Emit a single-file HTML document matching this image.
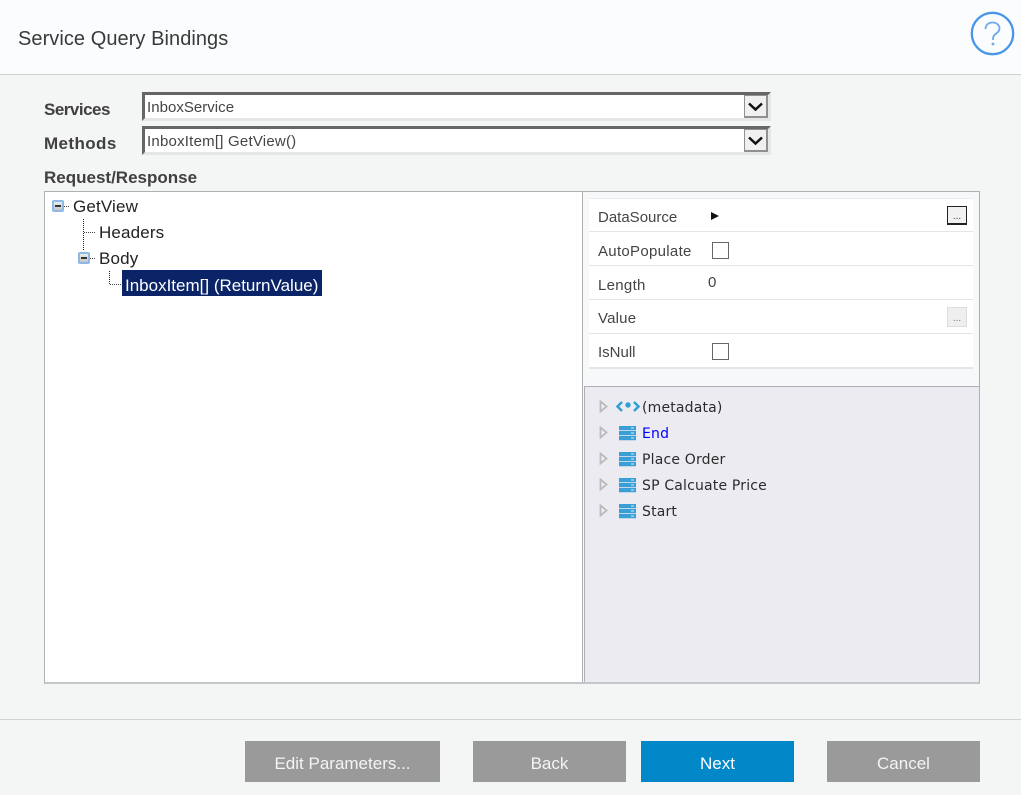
<!DOCTYPE html>
<html><head><meta charset="utf-8"><style>
html,body{margin:0;padding:0}
body{width:1021px;height:795px;overflow:hidden;background:#f4f5f5;position:relative;font-family:"Liberation Sans",sans-serif;color:#333}
.a{position:absolute;white-space:nowrap}
.lb{font-size:17px;font-weight:bold;color:#404040;line-height:22px}
.sel{position:absolute;left:142px;width:629px;height:29px;box-sizing:border-box;background:#fff;border-top:3px solid #666;border-left:3px solid #666;border-right:3px solid #e6e6e6;border-bottom:3px solid #e6e6e6;font-size:15px;line-height:25px;padding-left:2px;color:#444;letter-spacing:.22px}
.dd{position:absolute;right:0;top:0;width:24px;height:23px;box-sizing:border-box;background:#f0f0f0;border:1px solid #909090;border-width:1px 2px 2px 1px;letter-spacing:0}
.p{position:absolute;left:589px;width:384px;height:33px;background:#fff;border-bottom:2px solid #e4e6e6}
.k{position:absolute;left:598px;font-size:15px;line-height:20px;color:#444;white-space:nowrap}
.cb{position:absolute;left:712px;width:15px;height:15px;border:1px solid #666;background:#fff}
.t{position:absolute;font-size:17px;line-height:22px;color:#222;white-space:nowrap;letter-spacing:.15px}
.m{position:absolute;left:642px;font-family:"DejaVu Sans",sans-serif;font-size:14px;line-height:18px;color:#2b2b2b;white-space:nowrap;letter-spacing:.18px}
.btn{position:absolute;top:741px;height:41px;background:#9a9a9a;color:#f4f4f4;font-size:17px;line-height:45px;text-align:center}
.tri{position:absolute;left:599px}
.ic{position:absolute;left:619px}
.box{position:absolute;width:12px;height:12px;box-sizing:border-box;border:2px solid #8dbae4;background:linear-gradient(#ececec,#c4c6ca);border-radius:2px}
.box:after{content:"";position:absolute;left:1px;top:3px;width:6px;height:2px;background:#333}
.dv{position:absolute;border-left:1px dotted #222}
.dh{position:absolute;border-top:1px dotted #444;height:0}
</style></head><body>

<div class="a" style="left:0;top:0;width:1021px;height:74px;background:#fbfcfd;border-bottom:1px solid #cfd0cc"></div>
<div class="a" style="left:18px;top:26px;font-size:20px;line-height:26px;color:#3a3a3a;letter-spacing:.06px">Service Query Bindings</div>
<svg class="a" style="left:970px;top:11px" width="46" height="46" viewBox="0 0 46 46">
<circle cx="22.500" cy="22.500" r="20.700" fill="none" stroke="#4796ea" stroke-width="2.300"/>
<path d="M15.500 18c0-4 3-6.500 7-6.500s7 2.500 7 6c0 5-6.500 5-6.500 10v1.500" fill="none" stroke="#6fa8e8" stroke-width="1.800"/>
<circle cx="23" cy="33" r="1.400" fill="#6fa8e8"/>
</svg>

<div class="a lb" style="left:44px;top:99px;letter-spacing:-.5px">Services</div>
<div class="a lb" style="left:44px;top:133px;letter-spacing:.4px">Methods</div>
<div class="a lb" style="left:44px;top:167px">Request/Response</div>

<div class="sel" style="top:92px;letter-spacing:.03px">InboxService<div class="dd"><svg width="22" height="20" style="position:absolute;left:0;top:0"><path d="M4 7.500l6.500 6 6.500-6" fill="none" stroke="#111" stroke-width="2.500"/></svg></div></div>
<div class="sel" style="top:126px">InboxItem[] GetView()<div class="dd"><svg width="22" height="20" style="position:absolute;left:0;top:0"><path d="M4 7.500l6.500 6 6.500-6" fill="none" stroke="#111" stroke-width="2.500"/></svg></div></div>

<div class="a" style="left:44px;top:191px;width:936px;height:493px;box-sizing:border-box;border:1px solid #aeb0b2;border-bottom:2px solid #c4c6ca;background:#f7f8f9"></div>
<div class="a" style="left:45px;top:192px;width:537px;height:490px;background:#fff;border-right:1px solid #aeb0b2"></div>
<div class="a" style="left:584px;top:386px;width:394px;height:295px;background:#ecebf1;border-top:1px solid #aeb0b2;border-left:1px solid #aeb0b2"></div>

<div class="box" style="left:52px;top:200px"></div>
<div class="dh" style="left:64px;top:206px;width:5px"></div>
<div class="t" style="left:73px;top:196px">GetView</div>
<div class="dv" style="left:83px;top:219px;height:31px"></div>
<div class="dh" style="left:84px;top:232px;width:11px"></div>
<div class="t" style="left:99px;top:222px">Headers</div>
<div class="box" style="left:78px;top:252px"></div>
<div class="dh" style="left:90px;top:258px;width:5px"></div>
<div class="t" style="left:99px;top:248px">Body</div>
<div class="dv" style="left:109px;top:271px;height:13px"></div>
<div class="dh" style="left:110px;top:284px;width:11px"></div>
<div class="a" style="left:122px;top:270px;width:200px;height:26px;background:#0b2468"></div>
<div class="a" style="left:125px;top:275px;font-size:17px;line-height:21px;color:#fff">InboxItem[] (ReturnValue)</div>

<div class="p" style="top:198px;border-top:1px solid #ececec;height:32px"></div>
<div class="p" style="top:232px;height:33px;border-bottom-width:1px"></div>
<div class="p" style="top:266px;height:33px;border-bottom-width:1px"></div>
<div class="p" style="top:300px;height:33px;border-bottom-width:1px"></div>
<div class="p" style="top:334px"></div>

<div class="k" style="top:208px">DataSource</div>
<div class="k" style="top:242px;letter-spacing:.3px">AutoPopulate</div>
<div class="k" style="top:276px;letter-spacing:.3px">Length</div>
<div class="k" style="top:309px;letter-spacing:.2px">Value</div>
<div class="k" style="top:343px">IsNull</div>
<svg class="a" style="left:710px;top:211px" width="10" height="10"><path d="M1 1l8 4-8 4z" fill="#111"/></svg>
<div class="cb" style="top:242px"></div>
<div class="k" style="left:708px;top:273px">0</div>
<div class="cb" style="top:343px"></div>
<div class="a" style="left:947px;top:206px;width:20px;height:19px;box-sizing:border-box;border:1px solid #222;border-width:1px 1px 2px 1px;background:#f1f1f1;font-size:10px;line-height:20px;text-align:center;color:#444">...</div>
<div class="a" style="left:947px;top:307px;width:20px;height:20px;box-sizing:border-box;border:1px solid #ddd;background:#efefef;font-size:10px;line-height:21px;text-align:center;color:#777">...</div>

<svg class="tri" style="top:400px" width="10" height="13"><path d="M1.500 1.500l6 5-6 5z" fill="#f0f0f2" stroke="#bbb" stroke-width="1.800"/></svg>
<svg class="tri" style="top:426px" width="10" height="13"><path d="M1.500 1.500l6 5-6 5z" fill="#f0f0f2" stroke="#bbb" stroke-width="1.800"/></svg>
<svg class="tri" style="top:452px" width="10" height="13"><path d="M1.500 1.500l6 5-6 5z" fill="#f0f0f2" stroke="#bbb" stroke-width="1.800"/></svg>
<svg class="tri" style="top:478px" width="10" height="13"><path d="M1.500 1.500l6 5-6 5z" fill="#f0f0f2" stroke="#bbb" stroke-width="1.800"/></svg>
<svg class="tri" style="top:504px" width="10" height="13"><path d="M1.500 1.500l6 5-6 5z" fill="#f0f0f2" stroke="#bbb" stroke-width="1.800"/></svg>

<svg class="a" style="left:616px;top:400px" width="24" height="14"><path d="M6 2L1.500 6.500 6 11M18 2l4.500 4.500L18 11" fill="none" stroke="#2f9fd8" stroke-width="2.400"/><circle cx="12" cy="5" r="2.700" fill="#2f9fd8"/></svg>
<svg class="ic" style="top:426px" width="17" height="15"><path d="M0 0h17v4.300H0zM0 5h17v4.300H0zM0 10h17v4.300H0z" fill="#3a9fd5"/><path d="M12 2h3M12 7h3M12 12h3" stroke="#d9eef8" stroke-width="1"/></svg>
<svg class="ic" style="top:452px" width="17" height="15"><path d="M0 0h17v4.300H0zM0 5h17v4.300H0zM0 10h17v4.300H0z" fill="#3a9fd5"/><path d="M12 2h3M12 7h3M12 12h3" stroke="#d9eef8" stroke-width="1"/></svg>
<svg class="ic" style="top:478px" width="17" height="15"><path d="M0 0h17v4.300H0zM0 5h17v4.300H0zM0 10h17v4.300H0z" fill="#3a9fd5"/><path d="M12 2h3M12 7h3M12 12h3" stroke="#d9eef8" stroke-width="1"/></svg>
<svg class="ic" style="top:504px" width="17" height="15"><path d="M0 0h17v4.300H0zM0 5h17v4.300H0zM0 10h17v4.300H0z" fill="#3a9fd5"/><path d="M12 2h3M12 7h3M12 12h3" stroke="#d9eef8" stroke-width="1"/></svg>

<div class="m" style="top:399px">(metadata)</div>
<div class="m" style="top:425px;color:#0000ff">End</div>
<div class="m" style="top:451px">Place Order</div>
<div class="m" style="top:477px">SP Calcuate Price</div>
<div class="m" style="top:503px">Start</div>

<div class="a" style="left:0;top:719px;width:1021px;height:1px;background:#d2d3cf"></div>
<div class="btn" style="left:245px;width:195px">Edit Parameters...</div>
<div class="btn" style="left:473px;width:153px">Back</div>
<div class="btn" style="left:641px;width:153px;background:#0288c8;color:#fff">Next</div>
<div class="btn" style="left:827px;width:153px">Cancel</div>
</body></html>
